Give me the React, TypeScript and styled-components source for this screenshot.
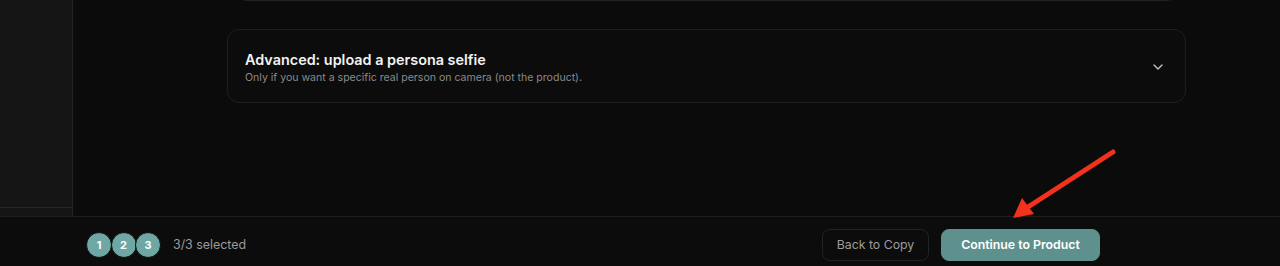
import React from "react";
import styled, { createGlobalStyle } from "styled-components";
import { ChevronDown } from "lucide-react";

const Global = createGlobalStyle`
  html, body { margin: 0; padding: 0; background: #0b0b0b; }
  body { font-family: Inter, "Noto Sans", sans-serif; -webkit-font-smoothing: antialiased; }
  * { box-sizing: border-box; }
`;

const Page = styled.div`
  position: relative;
  width: 1280px;
  height: 266px;
  display: flex;
  flex-direction: column;
  background: #0b0b0b;
  overflow: hidden;
`;

const Upper = styled.div`
  flex: 1;
  display: flex;
  min-height: 0;
`;

const Sidebar = styled.aside`
  width: 73px;
  display: flex;
  flex-direction: column;
  background: #151515;
  border-right: 1px solid #242424;
`;

const SidebarBody = styled.div`
  flex: 1;
`;

const SidebarFoot = styled.div`
  height: 9px;
  border-top: 1px solid #262626;
`;

const Main = styled.main`
  flex: 1;
  padding-left: 154px;
  display: flex;
  flex-direction: column;
`;

const PrevCard = styled.div`
  width: 944px;
  height: 41px;
  margin-top: -40px;
  margin-left: 8px;
  border: 1px solid #222;
  border-radius: 12px;
`;

const Accordion = styled.div`
  margin-top: 28px;
  width: 959px;
  height: 74px;
  border: 1px solid #1f1f1f;
  border-radius: 12px;
  background: #0c0c0c;
  display: flex;
  align-items: center;
  justify-content: space-between;
  padding: 0 19px 0 17px;
`;

const AccText = styled.div`
  display: flex;
  flex-direction: column;
  gap: 3px;
  margin-top: 2px;
`;

const AccTitle = styled.div`
  font-size: 14.4px;
  font-weight: 600;
  color: #f2f2f2;
`;

const AccSub = styled.div`
  font-size: 10.55px;
  color: #8a8a8a;
`;

const Chevron = styled(ChevronDown)`
  color: #c4c4c4;
  margin-top: 2px;
`;

const BottomBar = styled.footer`
  height: 50px;
  border-top: 1px solid #1d1d1d;
  background: #0c0c0c;
  display: flex;
  align-items: center;
  padding: 6px 180px 0 86px;
`;

const Steps = styled.div`
  display: flex;
  align-items: center;
`;

const Step = styled.div`
  width: 26px;
  height: 26px;
  border-radius: 50%;
  background: #6ea7a3;
  color: #fff;
  font-size: 11px;
  font-weight: 700;
  display: flex;
  align-items: center;
  justify-content: center;
  border: 1px solid #0c0c0c;
  & + & { margin-left: -1.5px; }
`;

const Selected = styled.span`
  margin-left: 12px;
  font-size: 12.4px;
  color: #9b9b9b;
`;

const Actions = styled.div`
  margin-left: auto;
  display: flex;
  gap: 12px;
`;

const Button = styled.button<{ $primary?: boolean }>`
  height: 32px;
  width: ${(p) => (p.$primary ? "159px" : "107px")};
  border-radius: 8px;
  font-family: Inter, "Noto Sans", sans-serif;
  font-size: 12.3px;
  font-weight: ${(p) => (p.$primary ? 600 : 400)};
  padding: 0;
  border: 1px solid ${(p) => (p.$primary ? "#5e918d" : "#232323")};
  background: ${(p) => (p.$primary ? "#5e918d" : "#0c0c0c")};
  color: ${(p) => (p.$primary ? "#ffffff" : "#9c9c9c")};
  cursor: pointer;
`;

const Arrow = styled.svg`
  position: absolute;
  left: 1000px;
  top: 140px;
  pointer-events: none;
`;

export default function App() {
  return (
    <>
      <Global />
      <Page>
        <Upper>
          <Sidebar>
            <SidebarBody />
            <SidebarFoot />
          </Sidebar>
          <Main>
            <PrevCard />
            <Accordion>
              <AccText>
                <AccTitle>Advanced: upload a persona selfie</AccTitle>
                <AccSub>Only if you want a specific real person on camera (not the product).</AccSub>
              </AccText>
              <Chevron size={16} strokeWidth={2} />
            </Accordion>
          </Main>
        </Upper>
        <BottomBar>
          <Steps>
            <Step>1</Step>
            <Step>2</Step>
            <Step>3</Step>
          </Steps>
          <Selected>3/3 selected</Selected>
          <Actions>
            <Button>Back to Copy</Button>
            <Button $primary>Continue to Product</Button>
          </Actions>
        </BottomBar>
        <Arrow width="130" height="85" viewBox="0 0 130 85">
          <line x1="113" y1="12" x2="28" y2="67" stroke="#f2321c" strokeWidth="5" strokeLinecap="round" />
          <polygon points="13,78 22,58 34,74" fill="#f2321c" />
        </Arrow>
      </Page>
    </>
  );
}
